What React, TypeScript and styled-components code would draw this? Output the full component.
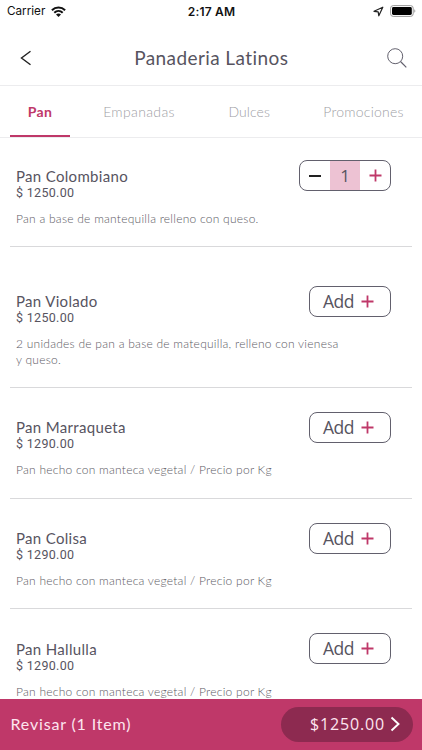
import React, { useState } from "react";
import styled, { createGlobalStyle, css } from "styled-components";

type Product = {
  id: number;
  name: string;
  price: string;
  description: string;
  spacious?: boolean;
};

const tabs = [
  { label: "Pan", width: 60, spacing: 0.3 },
  { label: "Empanadas", width: 138, spacing: 0.35 },
  { label: "Dulces", width: 82.5, spacing: 0.1 },
  { label: "Promociones", width: 146, spacing: 0.25 },
];

const products: Product[] = [
  {
    id: 1,
    name: "Pan Colombiano",
    price: "1250.00",
    description: "Pan a base de mantequilla relleno con queso.",
  },
  {
    id: 2,
    name: "Pan Violado",
    price: "1250.00",
    description:
      "2 unidades de pan a base de matequilla, relleno con vienesa y queso.",
    spacious: true,
  },
  {
    id: 3,
    name: "Pan Marraqueta",
    price: "1290.00",
    description: "Pan hecho con manteca vegetal / Precio por Kg",
  },
  {
    id: 4,
    name: "Pan Colisa",
    price: "1290.00",
    description: "Pan hecho con manteca vegetal / Precio por Kg",
  },
  {
    id: 5,
    name: "Pan Hallulla",
    price: "1290.00",
    description: "Pan hecho con manteca vegetal / Precio por Kg",
  },
];

const GlobalStyle = createGlobalStyle`
  * {
    box-sizing: border-box;
  }

  body {
    margin: 0;
    background-color: #fff;
    font-family: Lato, "Noto Sans", sans-serif;
    color: #57545f;
  }

  button {
    font: inherit;
    color: inherit;
    background: none;
    border: none;
    padding: 0;
    cursor: pointer;
  }
`;

const Screen = styled.div`
  width: 422px;
  height: 750px;
  display: flex;
  flex-direction: column;
  overflow: hidden;
  background-color: #fff;
`;

const StatusBar = styled.div`
  height: 22px;
  flex-shrink: 0;
  display: grid;
  grid-template-columns: 1fr auto 1fr;
  align-items: center;
  padding: 0 6px 0 7px;
  font-family: Inter, sans-serif;
  font-size: 11.7px;
  color: #111;
`;

const StatusGroup = styled.div<{ $end?: boolean }>`
  display: flex;
  align-items: center;
  gap: 6px;
  justify-content: ${(props) => (props.$end ? "flex-end" : "flex-start")};
`;

const Clock = styled.span`
  font-weight: 600;
  font-size: 12px;
  letter-spacing: 0.2px;
`;

const Header = styled.header`
  height: 64px;
  flex-shrink: 0;
  display: grid;
  grid-template-columns: 40px 1fr 40px;
  align-items: center;
  padding: 8px 5.5px 0 6px;
  border-bottom: 1px solid #ececee;
`;

const IconButton = styled.button`
  display: flex;
  align-items: center;
  justify-content: center;
  height: 32px;
`;

const Heading = styled.h1`
  margin: 0;
  text-align: center;
  font-size: 19px;
  font-weight: 400;
  letter-spacing: 0.42px;
  line-height: 24px;
`;

const TabBar = styled.nav`
  height: 52px;
  flex-shrink: 0;
  display: flex;
  padding-left: 10px;
  border-bottom: 1px solid #ececee;
`;

const Tab = styled.button<{
  $active: boolean;
  $width: number;
  $spacing: number;
}>`
  width: ${(props) => props.$width}px;
  flex-shrink: 0;
  height: 51px;
  padding-bottom: 1px;
  font-size: 14px;
  font-weight: 300;
  letter-spacing: ${(props) => props.$spacing}px;
  color: #a0a0a5;

  ${(props) =>
    props.$active &&
    css`
      padding: 2px 0 0;
      font-weight: 700;
      color: #bf3869;
      border-bottom: 2px solid #bf3869;
    `}
`;

const List = styled.main`
  flex: 1;
  min-height: 0;
  overflow: hidden;
  padding: 0 10px;
`;

const Row = styled.article<{ $spacious?: boolean }>`
  display: flex;
  justify-content: space-between;
  align-items: flex-start;
  padding: ${(props) => (props.$spacious ? "39px 21px 19.6px" : "24px 21px 19.7px")}
    6px;
  border-bottom: 1px solid #d9d9db;

  &:first-child {
    padding-top: 22.4px;
  }
`;

const Info = styled.div`
  width: 330px;
  padding-top: 6.5px;
  margin-right: -36px;
`;

const Name = styled.h2`
  margin: 0;
  font-size: 15px;
  font-weight: 400;
  letter-spacing: 0.32px;
  line-height: 18px;
`;

const Price = styled.p`
  margin: 0;
  font-family: Roboto, sans-serif;
  font-size: 12.5px;
  letter-spacing: 0.3px;
  line-height: 15px;
`;

const Description = styled.p`
  margin: 10.9px 0 0;
  font-size: 12px;
  font-weight: 300;
  letter-spacing: 0.25px;
  line-height: 15.5px;
  color: #5c5a64;
`;

const AddButton = styled.button`
  width: 82px;
  height: 31px;
  flex-shrink: 0;
  display: flex;
  align-items: center;
  justify-content: center;
  gap: 7px;
  padding-right: 3px;
  border: 1px solid #62606d;
  border-radius: 8px;
  font-family: "Open Sans", sans-serif;
  font-size: 17.5px;
  letter-spacing: -0.5px;
  line-height: 29px;
`;

const Stepper = styled.div`
  width: 92px;
  height: 31px;
  flex-shrink: 0;
  display: grid;
  grid-template-columns: repeat(3, 1fr);
  border: 1px solid #62606d;
  border-radius: 8px;
  overflow: hidden;
`;

const StepButton = styled.button`
  display: flex;
  align-items: center;
  justify-content: center;
`;

const Quantity = styled.span`
  background-color: #edc2d3;
  font-family: "Open Sans", sans-serif;
  font-size: 17px;
  line-height: 29px;
  text-align: center;
`;

const Footer = styled.footer`
  height: 51px;
  flex-shrink: 0;
  display: flex;
  align-items: center;
  justify-content: space-between;
  padding: 0 9px 1px 10.5px;
  background-color: #bf3869;
  color: #fff;
  font-size: 16px;
`;

const Review = styled.span`
  padding-bottom: 1px;
  letter-spacing: 0.83px;
  color: #fde5ef;
`;

const Total = styled.button`
  width: 132px;
  height: 35px;
  display: flex;
  align-items: center;
  justify-content: flex-end;
  gap: 5px;
  padding-right: 13px;
  border-radius: 18px;
  background-color: #8d2a50;
  font-family: "Open Sans", sans-serif;
  line-height: 32px;
  padding-bottom: 1px;
  letter-spacing: 0.85px;
  color: #fde5ef;
`;

function PlusIcon() {
  return (
    <svg width="13" height="13" viewBox="0 0 13 13">
      <path d="M6.5 .5v12M.5 6.5h12" stroke="#bf3869" strokeWidth="1.8" />
    </svg>
  );
}

function WifiIcon() {
  return (
    <svg width="15" height="11" viewBox="0 0 15 11" fill="none">
      <path
        d="M.9 4.2C4.6.6 10.4.6 14.1 4.2M3.3 6.7c2.4-2.3 6-2.3 8.4 0"
        stroke="#111"
        strokeWidth="2"
      />
      <path d="M5 8.5c1.5-1.2 3.5-1.2 5 0L7.5 11z" fill="#111" />
    </svg>
  );
}

function BatteryIcon() {
  return (
    <svg width="26" height="12" viewBox="0 0 26 12" fill="none">
      <rect x=".6" y=".6" width="22.6" height="10.8" rx="2.6" stroke="#999" />
      <rect x="2" y="2" width="19.8" height="8" rx="1.4" fill="#000" />
      <path d="M24.3 4.2c1.4.7 1.4 2.9 0 3.6z" fill="#999" />
    </svg>
  );
}

export default function App(): React.ReactElement {
  const [activeTab, setActiveTab] = useState<string>("Pan");
  const [cart, setCart] = useState<Record<number, number>>({ 1: 1 });

  const changeQuantity = (id: number, amount: number): void => {
    setCart({ ...cart, [id]: Math.max(0, (cart[id] || 0) + amount) });
  };

  const count = products.reduce((sum, p) => sum + (cart[p.id] || 0), 0);
  const total = products.reduce(
    (sum, p) => sum + (cart[p.id] || 0) * Number(p.price),
    0
  );

  return (
    <Screen>
      <GlobalStyle />
      <StatusBar>
        <StatusGroup>
          <span>Carrier</span>
          <WifiIcon />
        </StatusGroup>
        <Clock>2:17 AM</Clock>
        <StatusGroup $end>
          <svg width="11" height="11" viewBox="0 0 11 11" fill="none">
            <path
              d="M1 5.3 9.8 1.2 5.8 9.8 5.2 5.8z"
              stroke="#222"
              strokeWidth="1.2"
              strokeLinejoin="round"
            />
          </svg>
          <BatteryIcon />
        </StatusGroup>
      </StatusBar>
      <Header>
        <IconButton aria-label="Volver">
          <svg width="12" height="16" viewBox="0 0 12 16" fill="none">
            <path d="M10.5 1.3 1.5 8l9 6.7" stroke="#222" strokeWidth="1.4" />
          </svg>
        </IconButton>
        <Heading>Panaderia Latinos</Heading>
        <IconButton aria-label="Buscar">
          <svg width="20" height="20" viewBox="0 0 20 20" fill="none">
            <circle cx="8.2" cy="8.2" r="7.5" stroke="#62606d" />
            <path d="m13.5 13.5 5.8 5.8" stroke="#62606d" strokeWidth="1.2" />
          </svg>
        </IconButton>
      </Header>
      <TabBar>
        {tabs.map((tab) => (
          <Tab
            key={tab.label}
            $active={tab.label === activeTab}
            $width={tab.width}
            $spacing={tab.spacing}
            onClick={() => setActiveTab(tab.label)}
          >
            {tab.label}
          </Tab>
        ))}
      </TabBar>
      <List>
        {products.map((product) => (
          <Row key={product.id} $spacious={product.spacious}>
            <Info>
              <Name>{product.name}</Name>
              <Price>$ {product.price}</Price>
              <Description>{product.description}</Description>
            </Info>
            {cart[product.id] ? (
              <Stepper>
                <StepButton
                  aria-label="Quitar"
                  onClick={() => changeQuantity(product.id, -1)}
                >
                  <svg width="12" height="2" viewBox="0 0 12 2">
                    <path d="M0 1h12" stroke="#222" strokeWidth="1.8" />
                  </svg>
                </StepButton>
                <Quantity>{cart[product.id]}</Quantity>
                <StepButton
                  aria-label="Agregar"
                  onClick={() => changeQuantity(product.id, 1)}
                >
                  <PlusIcon />
                </StepButton>
              </Stepper>
            ) : (
              <AddButton onClick={() => changeQuantity(product.id, 1)}>
                Add
                <PlusIcon />
              </AddButton>
            )}
          </Row>
        ))}
      </List>
      <Footer>
        <Review>
          Revisar ({count} Item{count === 1 ? "" : "s"})
        </Review>
        <Total>
          ${total.toFixed(2)}
          <svg width="10" height="16" viewBox="0 0 10 16" fill="none">
            <path d="m1.5 1.5 7 6.5-7 6.5" stroke="#fff" strokeWidth="1.9" />
          </svg>
        </Total>
      </Footer>
    </Screen>
  );
}
